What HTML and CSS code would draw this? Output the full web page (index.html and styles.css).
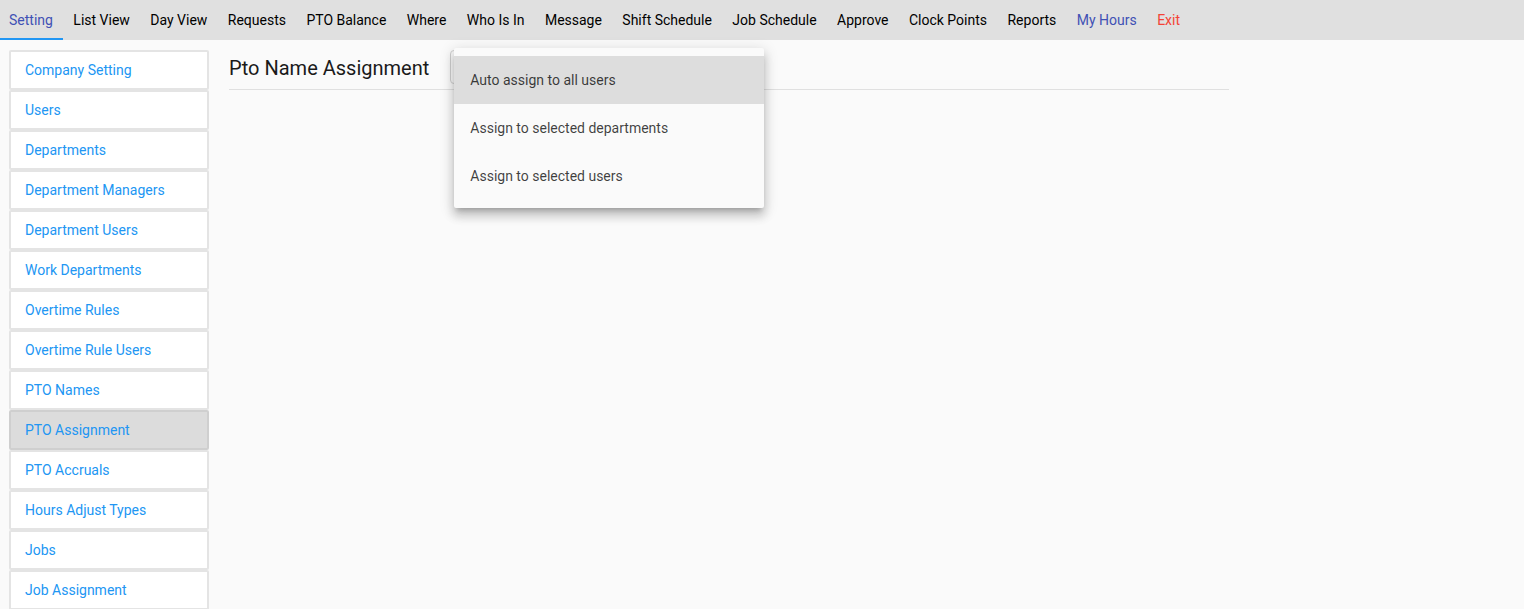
FILE: index.html
```html
<!DOCTYPE html>
<html>
<head>
<meta charset="utf-8">
<title>Pto Name Assignment</title>
<link rel="stylesheet" href="styles.css">
</head>
<body>
<nav class="topnav">
  <a class="nav-item active">Setting</a>
  <a class="nav-item">List View</a>
  <a class="nav-item">Day View</a>
  <a class="nav-item">Requests</a>
  <a class="nav-item">PTO Balance</a>
  <a class="nav-item">Where</a>
  <a class="nav-item">Who Is In</a>
  <a class="nav-item">Message</a>
  <a class="nav-item">Shift Schedule</a>
  <a class="nav-item">Job Schedule</a>
  <a class="nav-item">Approve</a>
  <a class="nav-item">Clock Points</a>
  <a class="nav-item">Reports</a>
  <a class="nav-item myhours">My Hours</a>
  <a class="nav-item exit">Exit</a>
</nav>
<div class="layout">
  <aside class="sidebar">
    <a class="side-item">Company Setting</a>
    <a class="side-item">Users</a>
    <a class="side-item">Departments</a>
    <a class="side-item">Department Managers</a>
    <a class="side-item">Department Users</a>
    <a class="side-item">Work Departments</a>
    <a class="side-item">Overtime Rules</a>
    <a class="side-item">Overtime Rule Users</a>
    <a class="side-item">PTO Names</a>
    <a class="side-item selected">PTO Assignment</a>
    <a class="side-item">PTO Accruals</a>
    <a class="side-item">Hours Adjust Types</a>
    <a class="side-item">Jobs</a>
    <a class="side-item">Job Assignment</a>
  </aside>
  <main class="main">
    <div class="header">
      <h1 class="title">Pto Name Assignment</h1>
      <div class="select-wrap">
        <div class="select-box"></div>
        <ul class="menu">
          <li class="menu-item hl">Auto assign to all users</li>
          <li class="menu-item">Assign to selected departments</li>
          <li class="menu-item">Assign to selected users</li>
        </ul>
      </div>
    </div>
  </main>
</div>
</body>
</html>
```
FILE: styles.css
```css
* { box-sizing: border-box; }
html, body { height: 100%; }
body {
  margin: 0;
  background: #fafafa;
  font-family: Roboto, "Noto Sans", Arial, sans-serif;
  font-size: 14px;
  overflow: hidden;
}
.topnav {
  display: flex;
  height: 40px;
  background: #e0e0e0;
}
.nav-item {
  display: flex;
  align-items: center;
  padding: 0 10px 0 9px;
  height: 40px;
  color: #000;
  font-size: 14px;
  cursor: pointer;
  border-bottom: 2px solid transparent;
  padding-top: 2px;
  white-space: nowrap;
}
.nav-item + .nav-item { padding-left: 10.45px; }
.nav-item.active {
  color: #3f51b5;
  border-bottom-color: #2196f3;
}
.nav-item.myhours { color: #3f51b5; }
.nav-item.exit { color: #f44336; }

.layout {
  display: flex;
  gap: 20px;
  padding: 10px 0 0 9px;
}
.sidebar {
  display: flex;
  flex-direction: column;
  width: 200px;
  flex: none;
}
.side-item {
  display: flex;
  align-items: center;
  height: 40px;
  padding-left: 14px;
  background: #fff;
  border: 2px solid #e4e4e4;
  border-radius: 2px;
  color: #2196f3;
  font-size: 14px;
  cursor: pointer;
}
.side-item.selected {
  background: #dcdcdc;
  border-color: #cfcfcf;
}
.main {
  width: 1000px;
}
.header {
  display: flex;
  align-items: center;
  height: 39px;
  border-bottom: 1px solid #e0e0e0;
  box-sizing: content-box;
}
.title {
  margin: 0;
  font-size: 20px;
  font-weight: 400;
  color: #1a1a1a;
  padding-bottom: 3px;
}
.select-wrap {
  position: relative;
  margin-left: 21px;
  align-self: flex-start;
}
.select-box {
  width: 300px;
  height: 34px;
  margin-top: 0;
  border: 1px solid #cfcfcf;
  border-radius: 4px;
}
.menu {
  position: absolute;
  left: 4px;
  top: -2px;
  width: 310px;
  margin: 0;
  padding: 8px 0;
  list-style: none;
  background: #fafafa;
  border-radius: 2px;
  box-shadow: 0 5px 5px -3px rgba(0,0,0,.2), 0 8px 10px 1px rgba(0,0,0,.14), 0 3px 14px 2px rgba(0,0,0,.12);
}
.menu-item {
  height: 48px;
  line-height: 48px;
  padding: 0 16px;
  color: rgba(0,0,0,.75);
  font-size: 14px;
}
.menu-item.hl { background: #dddddd; }
```
